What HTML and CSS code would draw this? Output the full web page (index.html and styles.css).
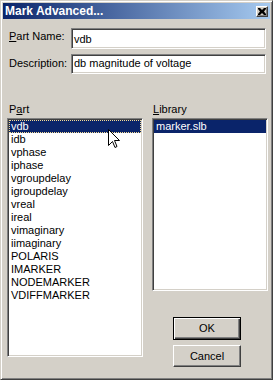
FILE: index.html
```html
<!DOCTYPE html>
<html>
<head>
<meta charset="utf-8">
<link rel="stylesheet" href="styles.css">
</head>
<body>
<div class="window">
  <div class="titlebar">
    <span class="title">Mark Advanced...</span>
    <span class="close"><svg width="8" height="7" viewBox="0 0 8 7"><path d="M0 0h2l2 2 2-2h2v1L6 3.5 8 6v1H6L4 5 2 7H0V6l2-2.5L0 1z" fill="#000"/></svg></span>
  </div>
  <div class="content">
    <div class="field">
      <label class="lbl"><u>P</u>art Name:</label>
      <div class="edit">vdb</div>
    </div>
    <div class="field field-desc">
      <label class="lbl">Description:</label>
      <div class="edit edit-desc">db magnitude of voltage</div>
    </div>
    <div class="lists">
      <div class="col col-part">
        <div class="grp-lbl">P<u>a</u>rt</div>
        <div class="listbox part-list">
          <div class="item sel focus">vdb</div>
          <div class="item">idb</div>
          <div class="item">vphase</div>
          <div class="item">iphase</div>
          <div class="item">vgroupdelay</div>
          <div class="item">igroupdelay</div>
          <div class="item">vreal</div>
          <div class="item">ireal</div>
          <div class="item">vimaginary</div>
          <div class="item">iimaginary</div>
          <div class="item">POLARIS</div>
          <div class="item">IMARKER</div>
          <div class="item">NODEMARKER</div>
          <div class="item">VDIFFMARKER</div>
        </div>
      </div>
      <div class="col col-lib">
        <div class="grp-lbl lib-lbl"><u>L</u>ibrary</div>
        <div class="listbox lib-list">
          <div class="item sel">marker.slb</div>
        </div>
        <div class="buttons">
          <div class="btn btn-default"><span>OK</span></div>
          <div class="btn"><span>Cancel</span></div>
        </div>
      </div>
    </div>
  </div>
  <svg class="cursor" width="13" height="21" viewBox="0 0 13 21"><path d="M0.5 0.5V16.5L4.5 12.5L7 18.5L9 17.5L6.5 11.5H11.5Z" fill="#fff" stroke="#000" stroke-width="1" stroke-linejoin="miter"/></svg>
</div>
</body>
</html>
```
FILE: styles.css
```css
html, body {
  margin: 0;
  padding: 0;
  background: #d4d0c8;
}

.window {
  position: relative;
  width: 273px;
  height: 380px;
  box-sizing: border-box;
  border: 1px solid;
  border-color: #d4d0c8 #404040 #404040 #d4d0c8;
  box-shadow: inset 1px 1px #fff, inset -1px -1px #808080;
  padding: 2px;
  background: #d4d0c8;
  font-family: "Liberation Sans", Arial, sans-serif;
  font-size: 11px;
  color: #000;
  display: flex;
  flex-direction: column;
}

.titlebar {
  height: 16px;
  flex: none;
  background: linear-gradient(to right, #0a246a, #a6caf0);
  display: flex;
  align-items: center;
  justify-content: space-between;
  padding: 0 2px 0 2px;
}

.title {
  color: #fff;
  font-weight: bold;
  font-size: 12px;
  line-height: 16px;
}

.close {
  width: 12px;
  height: 11px;
  box-sizing: border-box;
  background: #d4d0c8;
  border: 1px solid;
  border-color: #fff #404040 #404040 #fff;
  box-shadow: inset -1px -1px #808080;
  display: flex;
  align-items: center;
  justify-content: center;
}

.close svg {
  display: block;
}

.content {
  flex: 1;
  padding: 9px 2px 0 4px;
}

.field {
  display: flex;
  align-items: flex-start;
  padding-left: 2px;
}

.field-desc {
  margin-top: 5px;
}

.lbl {
  width: 62px;
  flex: none;
  line-height: 13px;
  padding-top: 2px;
}

.field-desc .lbl {
  padding-top: 3px;
}

.edit {
  width: 195px;
  height: 21px;
  box-sizing: border-box;
  background: #fff;
  border: 1px solid;
  border-color: #808080 #fff #fff #808080;
  box-shadow: inset 1px 1px #404040, inset -1px -1px #d4d0c8;
  padding: 4px 1px 0 2px;
  line-height: 13px;
  overflow: hidden;
  white-space: nowrap;
}

.edit-desc {
  height: 20px;
  padding-top: 2px;
}

.lists {
  display: flex;
  margin-top: 29px;
}

.col {
  display: flex;
  flex-direction: column;
}

.col-part {
  width: 136px;
}

.col-lib {
  width: 116px;
  margin-left: 9px;
}

.grp-lbl {
  line-height: 13px;
  margin-bottom: 2px;
  padding-left: 2px;
}

.lib-lbl {
  padding-left: 1px;
}

.listbox {
  box-sizing: border-box;
  background: #fff;
  border: 1px solid;
  border-color: #808080 #fff #fff #808080;
  box-shadow: inset 1px 1px #404040, inset -1px -1px #d4d0c8;
  padding: 1px;
}

.part-list {
  height: 239px;
}

.lib-list {
  height: 173px;
}

.item {
  height: 13px;
  line-height: 13px;
  padding-left: 2px;
  white-space: nowrap;
}

.item.sel {
  background: #0a246a;
  color: #fff;
}

.item.focus {
  outline: 1px dotted #f5db95;
  outline-offset: -1px;
}

.buttons {
  display: flex;
  flex-direction: column;
  gap: 5px;
  margin-top: 26px;
  margin-left: 21px;
}

.btn {
  width: 68px;
  height: 22px;
  box-sizing: border-box;
  border: 1px solid;
  border-color: #fff #404040 #404040 #fff;
  box-shadow: inset -1px -1px #808080;
  display: flex;
  align-items: center;
  justify-content: center;
  line-height: 13px;
}

.btn-default {
  height: 23px;
  border: 1px solid #000;
  box-shadow: inset 1px 1px #fff, inset -1px -1px #404040, inset -2px -2px #808080;
}

.cursor {
  position: absolute;
  left: 107px;
  top: 128px;
}
```
